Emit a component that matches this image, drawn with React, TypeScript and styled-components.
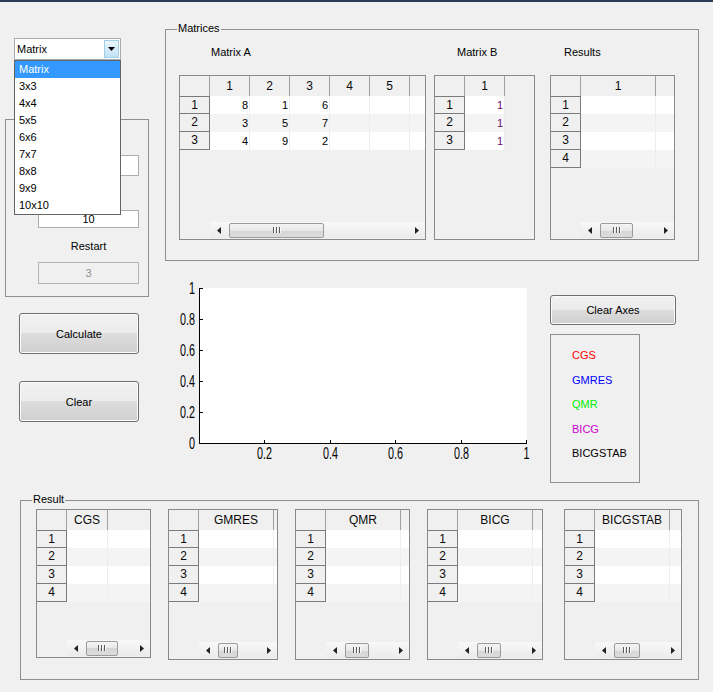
import styled, { createGlobalStyle } from "styled-components";

const GlobalStyle = createGlobalStyle`
  html, body {
    margin: 0;
    padding: 0;
    background: #f0f0f0;
  }
  body {
    font-family: "Liberation Sans", Arial, sans-serif;
    font-size: 11px;
    color: #000;
  }
`;

const Window = styled.div`
  width: 713px;
  height: 692px;
  box-sizing: border-box;
  border-top: 2px solid #2c3b57;
  background: #f0f0f0;
  display: flex;
  flex-direction: column;
  overflow: hidden;
`;

const TopRow = styled.div`
  display: flex;
  align-items: flex-start;
`;

const LeftCol = styled.div`
  width: 160px;
  flex: none;
  display: flex;
  flex-direction: column;
  align-items: flex-start;
`;

const RightCol = styled.div`
  display: flex;
  flex-direction: column;
  align-items: flex-start;
`;

/* popup menu */
const Combo = styled.div`
  position: relative;
  z-index: 5;
  margin: 36px 0 0 14px;
  width: 107px;
  height: 22px;
  box-sizing: border-box;
  border: 1px solid #a9abb0;
  background: #fff;
  display: flex;
  align-items: stretch;
`;

const ComboText = styled.div`
  flex: 1;
  padding-left: 2px;
  line-height: 20px;
`;

const ComboArrow = styled.div`
  width: 15px;
  margin: 1px;
  box-sizing: border-box;
  border: 1px solid #a4cde6;
  background: linear-gradient(#eaf6fd, #c0e3f6);
  display: flex;
  align-items: center;
  justify-content: center;
`;

const DropList = styled.ul`
  position: absolute;
  top: 21px;
  left: -1px;
  width: 107px;
  margin: 0;
  padding: 0;
  list-style: none;
  box-sizing: border-box;
  border: 1px solid #646464;
  background: #fff;
`;

const DropItem = styled.li<{ $active?: boolean }>`
  height: 17px;
  line-height: 17px;
  padding-left: 4px;
  background: ${(p) => (p.$active ? "#3399ff" : "transparent")};
  color: ${(p) => (p.$active ? "#fff" : "#000")};
`;

/* frames */
const Frame = styled.div<{ $w: number; $h: number }>`
  position: relative;
  flex: none;
  width: ${(p) => p.$w}px;
  height: ${(p) => p.$h}px;
  box-sizing: border-box;
  border: 1px solid #8e8f8f;
`;

const FrameTitle = styled.span`
  position: absolute;
  top: -8px;
  left: 11px;
  padding: 0 1px;
  line-height: 13px;
  background: #f0f0f0;
`;

const ParamFrame = styled(Frame)`
  margin: 59px 0 0 5px;
  display: flex;
  flex-direction: column;
  align-items: flex-start;
  padding-left: 32px;
`;

const Field = styled.input<{ $top: number; $h: number }>`
  margin: ${(p) => p.$top}px 0 0 0;
  width: 101px;
  height: ${(p) => p.$h}px;
  box-sizing: border-box;
  border: 1px solid #abadb3;
  background: #fff;
  padding: 0;
  font: 11px "Liberation Sans", Arial, sans-serif;
  color: #000;
  text-align: center;
  outline: none;
  &:disabled {
    border-color: #b4b4b4;
    background: #f0f0f0;
    color: #8d8d8d;
  }
`;

const FieldLabel = styled.div`
  margin-top: 11px;
  width: 101px;
  line-height: 14px;
  text-align: center;
`;

const PushButton = styled.button<{ $w: number; $h: number; $top: number; $left: number }>`
  flex: none;
  margin: ${(p) => p.$top}px 0 0 ${(p) => p.$left}px;
  width: ${(p) => p.$w}px;
  height: ${(p) => p.$h}px;
  padding: 0;
  border: 1px solid #707070;
  border-radius: 3px;
  background: linear-gradient(#f2f2f2 0%, #ebebeb 50%, #dddddd 50%, #cfcfcf 100%);
  box-shadow: inset 0 0 0 1px #fbfbfb;
  font: 11px "Liberation Sans", Arial, sans-serif;
  color: #000;
`;

/* matrices */
const MatricesFrame = styled(Frame)`
  margin: 27px 0 0 5px;
  display: flex;
  align-items: flex-start;
  padding-left: 13px;
`;

const TableGroup = styled.div<{ $gap: number }>`
  margin-left: ${(p) => p.$gap}px;
  display: flex;
  flex-direction: column;
  align-items: flex-start;
`;

const GroupLabel = styled.div<{ $indent: number }>`
  margin: 15px 0 16px ${(p) => p.$indent}px;
  line-height: 14px;
`;

/* uitable */
const TableFrame = styled.div<{ $w: number; $h: number; $gap?: number }>`
  flex: none;
  margin-left: ${(p) => p.$gap ?? 0}px;
  width: ${(p) => p.$w}px;
  height: ${(p) => p.$h}px;
  box-sizing: border-box;
  border: 1px solid #898989;
  background: #f0f0f0;
  display: flex;
  flex-direction: column;
  overflow: hidden;
`;

const TableGrid = styled.div<{ $cols: string }>`
  display: grid;
  grid-template-columns: ${(p) => p.$cols};
  grid-template-rows: 20px;
  grid-auto-rows: 18px;
  flex: none;
`;

const CornerCell = styled.div`
  box-sizing: border-box;
  border-right: 1px solid #a0a0a0;
`;

const HeadCell = styled.div<{ $cut?: boolean }>`
  box-sizing: border-box;
  border-right: ${(p) => (p.$cut ? "none" : "1px solid #a0a0a0")};
  line-height: 20px;
  text-align: center;
  font-size: 12px;
  color: #0a0a0a;
  white-space: nowrap;
  overflow: hidden;
`;

const RowHead = styled.div<{ $first?: boolean }>`
  box-sizing: border-box;
  border-right: 1px solid #7b7b7b;
  border-bottom: 1px solid #7b7b7b;
  border-top: ${(p) => (p.$first ? "1px solid #7b7b7b" : "none")};
  line-height: 17px;
  text-align: center;
  font-size: 12px;
  color: #0a0a0a;
`;

const DataCell = styled.div<{ $odd: boolean; $color?: string }>`
  box-sizing: border-box;
  background: ${(p) => (p.$odd ? "#ffffff" : "#f4f4f4")};
  border-right: 1px solid #ededed;
  padding-right: 1px;
  line-height: 18px;
  text-align: right;
  color: ${(p) => p.$color ?? "#000"};
`;

const Filler = styled.div`
  flex: 1;
`;

const ScrollTrack = styled.div`
  flex: none;
  margin: 0 0 1px 30px;
  height: 16px;
  background: linear-gradient(#f8f8f8, #ebebeb);
  display: flex;
  align-items: center;
`;

const ScrollArrow = styled.div<{ $end?: boolean }>`
  width: 17px;
  height: 16px;
  margin-left: ${(p) => (p.$end ? "auto" : "0")};
  display: flex;
  align-items: center;
  justify-content: center;
`;

const Thumb = styled.div<{ $w: number }>`
  margin-left: 2px;
  width: ${(p) => p.$w}px;
  height: 15px;
  box-sizing: border-box;
  border: 1px solid #9a9a9a;
  border-radius: 2px;
  background: linear-gradient(#f4f4f4 0%, #e8e8e8 50%, #d6d6d6 50%, #dcdcdc 100%);
  display: flex;
  align-items: center;
  justify-content: center;
`;

/* plot + legend */
const MiddleRow = styled.div`
  display: flex;
  align-items: flex-start;
`;

const ChartSvg = styled.svg`
  display: block;
  flex: none;
  margin: 20px 0 0 5px;
`;

const Controls = styled.div`
  margin: 34px 0 0 15px;
  display: flex;
  flex-direction: column;
  align-items: flex-start;
`;

const LegendBox = styled(Frame)`
  margin-top: 9px;
  padding: 8px 0 0 21px;
`;

const LegendItem = styled.div<{ $color: string }>`
  height: 24.5px;
  line-height: 24.5px;
  color: ${(p) => p.$color};
`;

/* results */
const ResultFrame = styled(Frame)`
  margin: 17px 0 0 20px;
  display: flex;
  align-items: flex-start;
  padding: 8px 0 0 15px;
`;

type Col = { label: string; width: number; cut?: boolean };

type TableProps = {
  w: number;
  h: number;
  gap?: number;
  cols: Col[];
  rows: string[][];
  valueColor?: string;
  thumb?: number;
};

function ArrowGlyph({ dir }: { dir: "left" | "right" | "down" }) {
  if (dir === "down") {
    return (
      <svg width="7" height="4" viewBox="0 0 7 4">
        <polygon points="0,0 7,0 3.5,4" fill="#000" />
      </svg>
    );
  }
  return (
    <svg width="4" height="7" viewBox="0 0 4 7">
      <polygon points={dir === "left" ? "4,0 4,7 0,3.5" : "0,0 0,7 4,3.5"} fill="#222" />
    </svg>
  );
}

function Grip() {
  return (
    <svg width="8" height="6" viewBox="0 0 8 6">
      {[0, 3, 6].map((x) => (
        <rect key={x} x={x} y={0} width={1} height={6} fill="#5a5a5a" />
      ))}
      {[1, 4, 7].map((x) => (
        <rect key={x} x={x} y={0} width={1} height={6} fill="#fafafa" />
      ))}
    </svg>
  );
}

function UiTable({ w, h, gap, cols, rows, valueColor, thumb }: TableProps) {
  const template = ["30px", ...cols.map((c) => `${c.width}px`)].join(" ");
  return (
    <TableFrame $w={w} $h={h} $gap={gap}>
      <TableGrid $cols={template}>
        <CornerCell />
        {cols.map((c, i) => (
          <HeadCell key={i} $cut={c.cut}>
            {c.label}
          </HeadCell>
        ))}
        {rows.map((r, ri) => [
          <RowHead key={`h${ri}`} $first={ri === 0}>
            {ri + 1}
          </RowHead>,
          ...cols.map((_, ci) => (
            <DataCell key={`${ri}-${ci}`} $odd={ri % 2 === 0} $color={valueColor}>
              {r[ci] ?? ""}
            </DataCell>
          )),
        ])}
      </TableGrid>
      <Filler />
      {thumb !== undefined && (
        <ScrollTrack>
          <ScrollArrow>
            <ArrowGlyph dir="left" />
          </ScrollArrow>
          <Thumb $w={thumb}>
            <Grip />
          </Thumb>
          <ScrollArrow $end>
            <ArrowGlyph dir="right" />
          </ScrollArrow>
        </ScrollTrack>
      )}
    </TableFrame>
  );
}

const yTicks = [1, 0.8, 0.6, 0.4, 0.2, 0];
const xTicks = [0.2, 0.4, 0.6, 0.8, 1];

function AxesChart() {
  const x0 = 35;
  const x1 = 362;
  const y0 = 7;
  const y1 = 162;
  const labelFont = { fontFamily: '"Liberation Sans", Arial, sans-serif', fontSize: 16 };
  const fit = (t: string) => ({
    textLength: t.length > 1 ? 15 : 6,
    lengthAdjust: "spacingAndGlyphs" as const,
  });
  return (
    <ChartSvg width={370} height={182} viewBox="0 0 370 182">
      <rect x={x0} y={y0} width={x1 - x0} height={y1 - y0} fill="#fff" />
      <line x1={34.5} y1={y0} x2={34.5} y2={y1 + 1} stroke="#000" />
      <line x1={34} y1={y1 + 0.5} x2={x1} y2={y1 + 0.5} stroke="#000" />
      {yTicks.map((v) => {
        const y = Math.round(y0 + (y1 - y0) * (1 - v));
        const t = String(v);
        return (
          <g key={`y${v}`}>
            <line x1={35} y1={y + 0.5} x2={38} y2={y + 0.5} stroke="#000" />
            <text x={30} y={y + 6} textAnchor="end" fill="#000" style={labelFont} {...fit(t)}>
              {t}
            </text>
          </g>
        );
      })}
      {xTicks.map((v) => {
        const x = Math.round(34 + (x1 - x0) * v) + 0.5;
        const t = String(v);
        return (
          <g key={`x${v}`}>
            <line x1={x} y1={y1} x2={x} y2={y1 - 3} stroke="#000" />
            <text x={x} y={178} textAnchor="middle" fill="#000" style={labelFont} {...fit(t)}>
              {t}
            </text>
          </g>
        );
      })}
    </ChartSvg>
  );
}

const sizes = ["Matrix", "3x3", "4x4", "5x5", "6x6", "7x7", "8x8", "9x9", "10x10"];

const matrixA = [
  ["8", "1", "6"],
  ["3", "5", "7"],
  ["4", "9", "2"],
];
const matrixB = [["1"], ["1"], ["1"]];
const emptyRows = [[], [], [], []] as string[][];

const legend = [
  { name: "CGS", color: "#ff0000" },
  { name: "GMRES", color: "#0000ff" },
  { name: "QMR", color: "#00ee00" },
  { name: "BICG", color: "#cc00cc" },
  { name: "BICGSTAB", color: "#000000" },
];

const methodCol = (label: string, width = 75): Col[] => [
  { label, width },
  { label: "", width: 75, cut: true },
];

export default function App() {
  return (
    <>
      <GlobalStyle />
      <Window>
        <TopRow>
          <LeftCol>
            <Combo>
              <ComboText>Matrix</ComboText>
              <ComboArrow>
                <ArrowGlyph dir="down" />
              </ComboArrow>
              <DropList>
                {sizes.map((s, i) => (
                  <DropItem key={s} $active={i === 0}>
                    {s}
                  </DropItem>
                ))}
              </DropList>
            </Combo>
            <ParamFrame $w={144} $h={178}>
              <Field $top={35} $h={21} readOnly defaultValue="" />
              <Field $top={34} $h={18} readOnly defaultValue="10" />
              <FieldLabel>Restart</FieldLabel>
              <Field $top={9} $h={22} disabled defaultValue="3" />
            </ParamFrame>
            <PushButton $w={120} $h={41} $top={16} $left={19}>
              Calculate
            </PushButton>
            <PushButton $w={120} $h={41} $top={27} $left={19}>
              Clear
            </PushButton>
          </LeftCol>

          <RightCol>
            <MatricesFrame $w={534} $h={232}>
              <FrameTitle>Matrices</FrameTitle>
              <TableGroup $gap={0}>
                <GroupLabel $indent={32}>Matrix A</GroupLabel>
                <UiTable
                  w={247}
                  h={165}
                  cols={[
                    ...["1", "2", "3", "4", "5"].map((l) => ({ label: l, width: 40 })),
                    { label: "", width: 40, cut: true },
                  ]}
                  rows={matrixA}
                  thumb={95}
                />
              </TableGroup>
              <TableGroup $gap={8}>
                <GroupLabel $indent={23}>Matrix B</GroupLabel>
                <UiTable
                  w={101}
                  h={165}
                  cols={[{ label: "1", width: 40 }]}
                  rows={matrixB}
                  valueColor="#6e0a6e"
                />
              </TableGroup>
              <TableGroup $gap={15}>
                <GroupLabel $indent={14}>Results</GroupLabel>
                <UiTable
                  w={125}
                  h={165}
                  cols={[
                    { label: "1", width: 75 },
                    { label: "", width: 75, cut: true },
                  ]}
                  rows={emptyRows}
                  thumb={33}
                />
              </TableGroup>
            </MatricesFrame>

            <MiddleRow>
              <AxesChart />
              <Controls>
                <PushButton $w={126} $h={30} $top={0} $left={0}>
                  Clear Axes
                </PushButton>
                <LegendBox $w={90} $h={149}>
                  {legend.map((l) => (
                    <LegendItem key={l.name} $color={l.color}>
                      {l.name}
                    </LegendItem>
                  ))}
                </LegendBox>
              </Controls>
            </MiddleRow>
          </RightCol>
        </TopRow>

        <ResultFrame $w={679} $h={180}>
          <FrameTitle>Result</FrameTitle>
          <UiTable w={115} h={149} cols={methodCol("CGS", 41)} rows={emptyRows} thumb={32} />
          <UiTable w={110} h={151} gap={17} cols={methodCol("GMRES")} rows={emptyRows} thumb={20} />
          <UiTable w={115} h={151} gap={17} cols={methodCol("QMR")} rows={emptyRows} thumb={24} />
          <UiTable w={116} h={151} gap={17} cols={methodCol("BICG")} rows={emptyRows} thumb={24} />
          <UiTable w={118} h={151} gap={21} cols={methodCol("BICGSTAB")} rows={emptyRows} thumb={26} />
        </ResultFrame>
      </Window>
    </>
  );
}
